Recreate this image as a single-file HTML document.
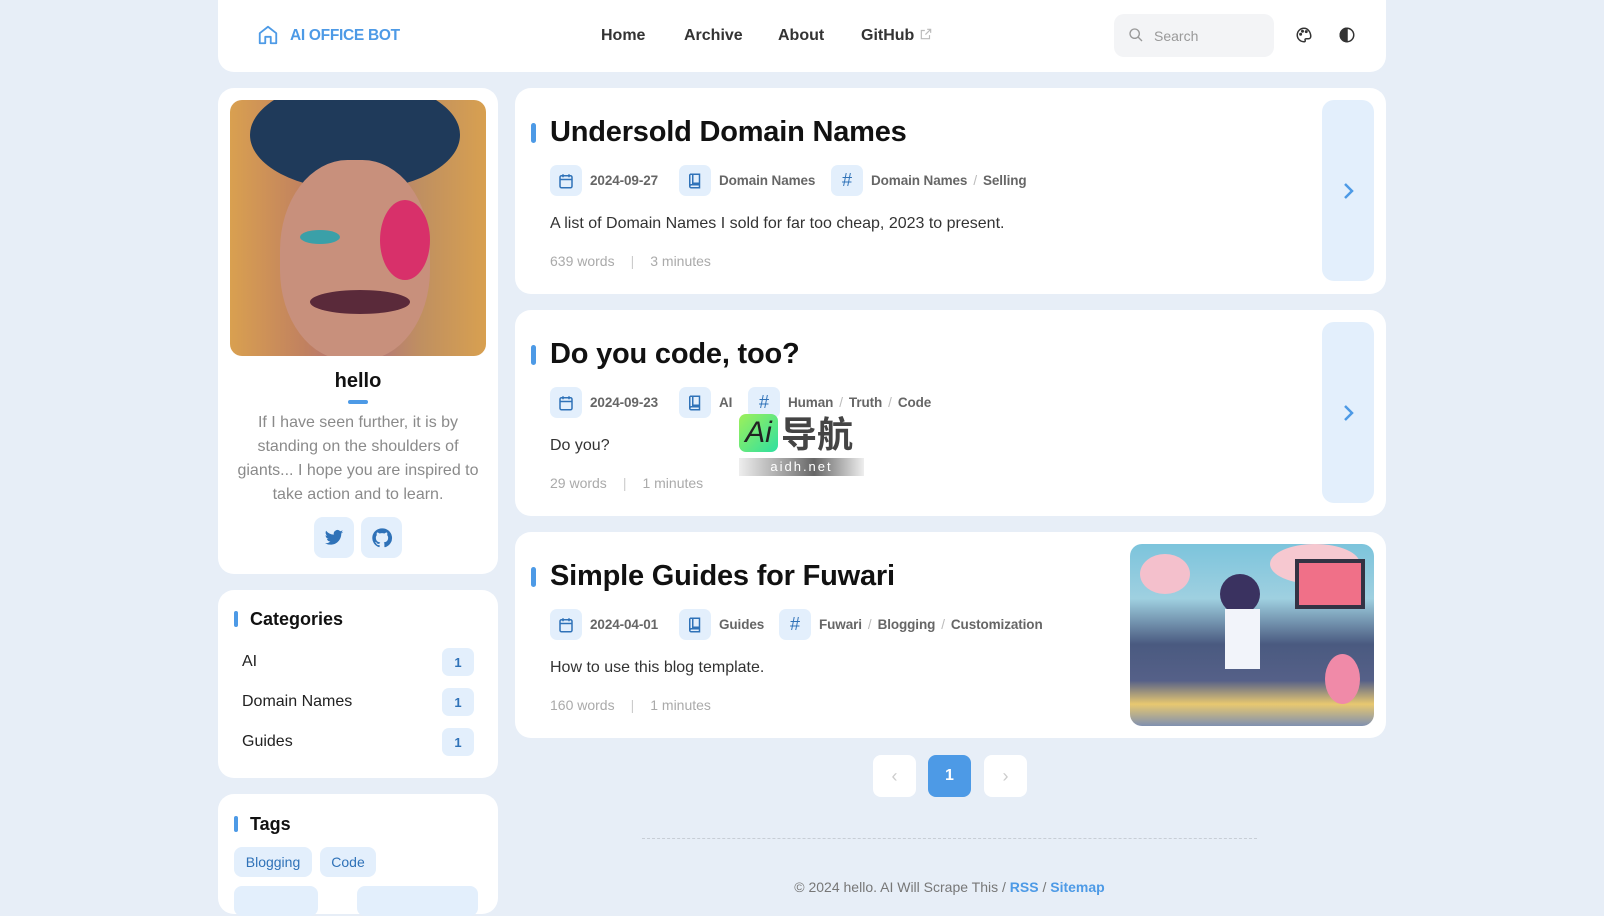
<!DOCTYPE html>
<html><head><meta charset="utf-8"><style>
*{margin:0;padding:0;box-sizing:border-box}
body{width:1604px;height:891px;overflow:hidden;background:#e7eef7;font-family:"Liberation Sans","Noto Sans CJK SC",sans-serif;color:#222;position:relative}
.a{position:absolute}
.card{position:absolute;background:#fff;border-radius:16px}
.nav{position:absolute;top:27px;font-size:16px;font-weight:bold;color:#333;line-height:18px;white-space:nowrap}
.ib{position:absolute;width:32px;height:31px;border-radius:7px;background:#e3effc;display:flex;align-items:center;justify-content:center}
.meta{position:absolute;font-size:13.5px;color:#666;font-weight:bold;white-space:nowrap;letter-spacing:-0.1px}
.meta .s{color:#bbb;font-weight:normal;margin:0 6px}
.title{position:absolute;left:550px;font-size:29px;font-weight:bold;color:#111;letter-spacing:-0.2px}
.bar{position:absolute;left:531px;width:5px;height:20px;border-radius:3px;background:#4d9ae6}
.desc{position:absolute;left:550px;font-size:16px;color:#333}
.wc{position:absolute;left:550px;font-size:14px;color:#aaa;white-space:nowrap}
.arrow{position:absolute;left:1322px;width:52px;border-radius:12px;background:#e3effc;display:flex;align-items:center;justify-content:center}
.cat{position:absolute;left:242px;font-size:16px;color:#222}
.badge{position:absolute;left:442px;width:32px;height:28px;border-radius:7px;background:#e3effc;color:#2f72b8;font-size:13px;font-weight:bold;display:flex;align-items:center;justify-content:center}
.tag{position:absolute;height:30px;border-radius:8px;background:#e3effc;color:#2f72b8;font-size:14px;display:flex;align-items:center;justify-content:center}
.pg{position:absolute;top:755px;width:43px;height:42px;border-radius:8px;background:#fff;display:flex;align-items:center;justify-content:center;color:#ccc;font-size:18px}
</style></head><body>

<div class="card" style="left:218px;top:-16px;width:1168px;height:88px"></div>
<svg class="a" style="left:257px;top:23px" width="22" height="24" viewBox="0 0 24 24" fill="none" stroke="#4d9ae6" stroke-width="2" stroke-linejoin="round"><path d="M3 10 L12 3 L21 10 V21 H15 V14 H9 V21 H3 Z"/></svg>
<div class="a" style="left:290px;top:27px;font-size:15.5px;font-weight:bold;color:#4d9ae6;letter-spacing:-0.3px">AI OFFICE BOT</div>
<div class="nav" style="left:601px">Home</div>
<div class="nav" style="left:684px">Archive</div>
<div class="nav" style="left:778px">About</div>
<div class="nav" style="left:861px">GitHub <svg style="vertical-align:-1px" width="14" height="14" viewBox="0 0 24 24" fill="none" stroke="#bbb" stroke-width="2"><path d="M14 4h6v6M20 4l-9 9M18 14v6H4V6h6"/></svg></div>
<div class="a" style="left:1114px;top:14px;width:160px;height:43px;border-radius:10px;background:#f3f4f6"></div>
<svg class="a" style="left:1128px;top:27px" width="16" height="16" viewBox="0 0 24 24" fill="none" stroke="#999" stroke-width="2"><circle cx="10" cy="10" r="7"/><path d="M15 15l6 6"/></svg>
<div class="a" style="left:1154px;top:28px;font-size:14px;color:#999">Search</div>
<svg class="a" style="left:1295px;top:26px" width="18" height="18" viewBox="0 0 24 24" fill="none" stroke="#333" stroke-width="2"><path d="M12 3a9 9 0 1 0 0 18c1.5 0 2-1 1.5-2s0-2 1.5-2H18a3 3 0 0 0 3-3c0-6-4-11-9-11z"/><circle cx="7.5" cy="11" r="1" fill="#333"/><circle cx="10" cy="7" r="1" fill="#333"/><circle cx="15" cy="7.5" r="1" fill="#333"/></svg>
<svg class="a" style="left:1338px;top:26px" width="18" height="18" viewBox="0 0 24 24" fill="none" stroke="#333" stroke-width="2"><circle cx="12" cy="12" r="9"/><path d="M12 3a9 9 0 0 0 0 18z" fill="#333"/></svg>

<!-- profile -->
<div class="card" style="left:218px;top:88px;width:280px;height:486px"></div>
<div class="a" style="left:230px;top:100px;width:256px;height:256px;border-radius:12px;overflow:hidden;background:linear-gradient(90deg,#d9a050,#c08060 30%,#b07080 50%,#c09060 75%,#d8a050)">
<div class="a" style="left:20px;top:-20px;width:210px;height:110px;border-radius:50%;background:#1f3a5a"></div>
<div class="a" style="left:50px;top:60px;width:150px;height:200px;border-radius:45%;background:#c8907c"></div>
<div class="a" style="left:150px;top:100px;width:50px;height:80px;border-radius:50%;background:#d8306a"></div>
<div class="a" style="left:70px;top:130px;width:40px;height:14px;border-radius:50%;background:#3aa0a8"></div>
<div class="a" style="left:80px;top:190px;width:100px;height:24px;border-radius:50%;background:#5a2a3a"></div>
</div>
<div class="a" style="left:218px;top:370px;width:280px;text-align:center;font-size:20px;font-weight:bold;color:#111">hello</div>
<div class="a" style="left:348px;top:400px;width:20px;height:4px;border-radius:2px;background:#4d9ae6"></div>
<div class="a" style="left:230px;top:411px;width:256px;text-align:center;font-size:16px;line-height:24px;color:#8a8a8a">If I have seen further, it is by standing on the shoulders of giants... I hope you are inspired to take action and to learn.</div>
<div class="a" style="left:314px;top:517px;width:40px;height:41px;border-radius:9px;background:#e3effc;display:flex;align-items:center;justify-content:center"><svg width="22" height="20" viewBox="0 0 24 24"><path fill="#2f72b8" d="M23 4.6c-.8.4-1.7.6-2.6.7.9-.6 1.6-1.4 2-2.5-.9.5-1.900.9-2.9 1.100A4.5 4.5 0 0 0 11.8 8 12.8 12.8 0 0 1 2.5 3.3a4.5 4.5 0 0 0 1.4 6c-.7 0-1.4-.2-2-.6 0 2.2 1.6 4 3.6 4.4-.7.2-1.4.2-2 .1.6 1.8 2.3 3.1 4.2 3.1A9 9 0 0 1 1 18.2 12.8 12.8 0 0 0 7.9 20c8.3 0 12.8-6.9 12.8-12.8v-.6c.9-.6 1.7-1.4 2.3-2z"/></svg></div>
<div class="a" style="left:361px;top:517px;width:41px;height:41px;border-radius:9px;background:#e3effc;display:flex;align-items:center;justify-content:center"><svg width="22" height="22" viewBox="0 0 24 24"><path fill="#2f72b8" d="M12 1.5a10.5 10.5 0 0 0-3.3 20.5c.5.1.7-.2.7-.5v-1.9c-2.9.6-3.500-1.300-3.500-1.300-.5-1.200-1.200-1.500-1.200-1.500-1-.7 0-.6 0-.6 1 .1 1.600 1.100 1.600 1.100.9 1.600 2.500 1.100 3.100.9.1-.7.4-1.100.7-1.400-2.300-.3-4.800-1.200-4.800-5.200 0-1.100.4-2.100 1.100-2.800-.1-.3-.5-1.300.1-2.800 0 0 .9-.3 2.900 1.100a10 10 0 0 1 5.200 0c2-1.400 2.900-1.100 2.900-1.100.6 1.500.2 2.500.1 2.800.7.7 1.100 1.700 1.100 2.800 0 4-2.500 4.900-4.800 5.200.4.3.7 1 .7 1.900v2.900c0 .3.2.6.7.5A10.5 10.5 0 0 0 12 1.5z"/></svg></div>

<!-- categories -->
<div class="card" style="left:218px;top:590px;width:280px;height:188px"></div>
<div class="a" style="left:234px;top:611px;width:4px;height:16px;border-radius:2px;background:#4d9ae6"></div>
<div class="a" style="left:250px;top:609px;font-size:18px;font-weight:bold;color:#111">Categories</div>
<div class="cat" style="top:653px">AI</div><div class="badge" style="top:648px">1</div>
<div class="cat" style="top:693px">Domain Names</div><div class="badge" style="top:688px">1</div>
<div class="cat" style="top:733px">Guides</div><div class="badge" style="top:728px">1</div>

<!-- tags -->
<div class="card" style="left:218px;top:794px;width:280px;height:120px"></div>
<div class="a" style="left:234px;top:816px;width:4px;height:16px;border-radius:2px;background:#4d9ae6"></div>
<div class="a" style="left:250px;top:814px;font-size:18px;font-weight:bold;color:#111">Tags</div>
<div class="tag" style="left:234px;top:847px;width:78px">Blogging</div>
<div class="tag" style="left:320px;top:847px;width:56px">Code</div>
<div class="tag" style="left:234px;top:886px;width:84px"></div>
<div class="tag" style="left:357px;top:886px;width:121px"></div>

<!-- post 1 -->
<div class="card" style="left:515px;top:88px;width:871px;height:206px"></div>
<div class="bar" style="top:123px"></div>
<div class="title" style="top:116px">Undersold Domain Names</div>
<div class="ib" style="left:550px;top:165px"><svg width="18" height="18" viewBox="0 0 24 24" fill="none" stroke="#2f72b8" stroke-width="2"><rect x="4" y="5" width="16" height="16" rx="2"/><path d="M4 10h16M8 3v4M16 3v4"/></svg></div>
<div class="meta" style="left:590px;top:173px">2024-09-27</div>
<div class="ib" style="left:679px;top:165px"><svg width="18" height="18" viewBox="0 0 24 24" fill="none" stroke="#2f72b8" stroke-width="2"><path d="M6 3h12v18H7a2 2 0 0 1-2-2V4z M9 3v12h9 M5 19a2 2 0 0 1 2-2h11"/></svg></div>
<div class="meta" style="left:719px;top:173px">Domain Names</div>
<div class="ib" style="left:831px;top:165px;color:#2f72b8;font-size:18px">#</div>
<div class="meta" style="left:871px;top:173px">Domain Names<span class="s">/</span>Selling</div>
<div class="desc" style="top:215px">A list of Domain Names I sold for far too cheap, 2023 to present.</div>
<div class="wc" style="top:253px">639 words<span style="margin:0 16px;color:#ccc">|</span>3 minutes</div>
<div class="arrow" style="top:100px;height:181px"><svg width="16" height="20" viewBox="0 0 16 20" fill="none" stroke="#4d9ae6" stroke-width="2.5"><path d="M5 3l7 7-7 7"/></svg></div>

<!-- post 2 -->
<div class="card" style="left:515px;top:310px;width:871px;height:206px"></div>
<div class="bar" style="top:345px"></div>
<div class="title" style="top:338px">Do you code, too?</div>
<div class="ib" style="left:550px;top:387px"><svg width="18" height="18" viewBox="0 0 24 24" fill="none" stroke="#2f72b8" stroke-width="2"><rect x="4" y="5" width="16" height="16" rx="2"/><path d="M4 10h16M8 3v4M16 3v4"/></svg></div>
<div class="meta" style="left:590px;top:395px">2024-09-23</div>
<div class="ib" style="left:679px;top:387px"><svg width="18" height="18" viewBox="0 0 24 24" fill="none" stroke="#2f72b8" stroke-width="2"><path d="M6 3h12v18H7a2 2 0 0 1-2-2V4z M9 3v12h9 M5 19a2 2 0 0 1 2-2h11"/></svg></div>
<div class="meta" style="left:719px;top:395px">AI</div>
<div class="ib" style="left:748px;top:387px;color:#2f72b8;font-size:18px">#</div>
<div class="meta" style="left:788px;top:395px">Human<span class="s">/</span>Truth<span class="s">/</span>Code</div>
<div class="desc" style="top:437px">Do you?</div>
<div class="wc" style="top:475px">29 words<span style="margin:0 16px;color:#ccc">|</span>1 minutes</div>
<div class="arrow" style="top:322px;height:181px"><svg width="16" height="20" viewBox="0 0 16 20" fill="none" stroke="#4d9ae6" stroke-width="2.5"><path d="M5 3l7 7-7 7"/></svg></div>

<!-- watermark -->
<div class="a" style="left:739px;top:414px;width:39px;height:38px;border-radius:7px;background:linear-gradient(135deg,#9ef05a,#2ee0a0);font-size:30px;font-style:italic;color:#222;line-height:38px;text-align:center">Ai</div>
<div class="a" style="left:781px;top:410px;font-size:36px;color:#444;font-family:'Noto Sans CJK SC',sans-serif;line-height:44px;font-weight:bold">导航</div>
<div class="a" style="left:739px;top:458px;width:125px;height:18px;background:linear-gradient(90deg,#eee,#999 40%,#666 60%,#eee);color:#fff;font-size:13px;letter-spacing:2px;text-align:center;line-height:18px">aidh.net</div>

<!-- post 3 -->
<div class="card" style="left:515px;top:532px;width:871px;height:206px"></div>
<div class="bar" style="top:567px"></div>
<div class="title" style="top:560px">Simple Guides for Fuwari</div>
<div class="ib" style="left:550px;top:609px"><svg width="18" height="18" viewBox="0 0 24 24" fill="none" stroke="#2f72b8" stroke-width="2"><rect x="4" y="5" width="16" height="16" rx="2"/><path d="M4 10h16M8 3v4M16 3v4"/></svg></div>
<div class="meta" style="left:590px;top:617px">2024-04-01</div>
<div class="ib" style="left:679px;top:609px"><svg width="18" height="18" viewBox="0 0 24 24" fill="none" stroke="#2f72b8" stroke-width="2"><path d="M6 3h12v18H7a2 2 0 0 1-2-2V4z M9 3v12h9 M5 19a2 2 0 0 1 2-2h11"/></svg></div>
<div class="meta" style="left:719px;top:617px">Guides</div>
<div class="ib" style="left:779px;top:609px;color:#2f72b8;font-size:18px">#</div>
<div class="meta" style="left:819px;top:617px">Fuwari<span class="s">/</span>Blogging<span class="s">/</span>Customization</div>
<div class="desc" style="top:659px">How to use this blog template.</div>
<div class="wc" style="top:697px">160 words<span style="margin:0 16px;color:#ccc">|</span>1 minutes</div>
<div class="a" style="left:1130px;top:544px;width:244px;height:182px;border-radius:12px;overflow:hidden;background:linear-gradient(180deg,#7cc4dc 0%,#9fd0e0 30%,#4a5a80 55%,#556088 75%,#e8c870 88%,#8090b0 100%)">
<div class="a" style="left:10px;top:10px;width:50px;height:40px;border-radius:50%;background:#f4c0cc"></div>
<div class="a" style="left:140px;top:0;width:90px;height:40px;border-radius:50%;background:#f6c8d0"></div>
<div class="a" style="left:165px;top:15px;width:70px;height:50px;background:#f07088;border:4px solid #334"></div>
<div class="a" style="left:90px;top:30px;width:40px;height:40px;border-radius:50%;background:#3a3260"></div>
<div class="a" style="left:95px;top:65px;width:35px;height:60px;background:#f2f4fa"></div>
<div class="a" style="left:195px;top:110px;width:35px;height:50px;border-radius:50%;background:#f08aa8"></div>
</div>

<!-- pagination -->
<div class="pg" style="left:873px">‹</div>
<div class="pg" style="left:928px;background:#4d9ae6;color:#fff;font-size:16px;font-weight:bold">1</div>
<div class="pg" style="left:984px">›</div>
<div class="a" style="left:642px;top:838px;width:615px;border-top:1px dashed #c8ced6"></div>
<div class="a" style="left:642px;top:879px;width:615px;text-align:center;font-size:14px;color:#777">© 2024 hello. AI Will Scrape This / <span style="color:#4d9ae6;font-weight:bold">RSS</span> / <span style="color:#4d9ae6;font-weight:bold">Sitemap</span></div>
</body></html>
